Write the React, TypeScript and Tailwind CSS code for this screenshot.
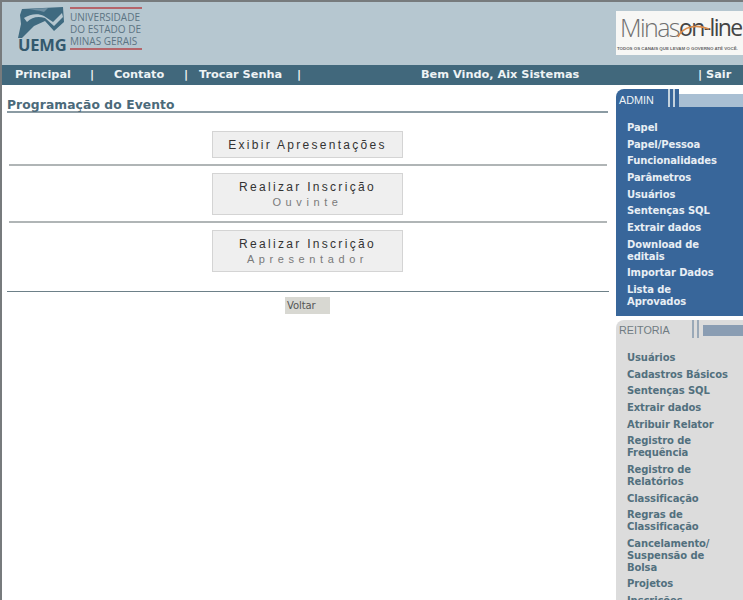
const adminLinks = [
  'Papel',
  'Papel/Pessoa',
  'Funcionalidades',
  'Parâmetros',
  'Usuários',
  'Sentenças SQL',
  'Extrair dados',
  'Download de editais',
  'Importar Dados',
  'Lista de Aprovados',
];

const reitoriaLinks = [
  'Usuários',
  'Cadastros Básicos',
  'Sentenças SQL',
  'Extrair dados',
  'Atribuir Relator',
  'Registro de Frequência',
  'Registro de Relatórios',
  'Classificação',
  'Regras de Classificação',
  'Cancelamento/ Suspensão de Bolsa',
  'Projetos',
  'Inscrições',
];

function UemgMark() {
  return (
    <svg width="47" height="31" viewBox="0 0 47 31" className="block">
      {/* dark shape of the mark */}
      <path d="M4 2 L45 0 L46 15 L36 24 L27 14 L16 19 L8 27 L4 31 L0 31 L3 17 L2 8 Z" fill="#3f6a80" />
      {/* light river */}
      <path
        d="M6 11 C12 7 20 6 26 9 L35 15 L44 6 L45 10 L36 19 L27 11 C20 9 14 10 9 15 Z"
        fill="#b6c7d0"
      />
      <path d="M11 2 L30 1 L26 5 C20 3 15 3 11 2 Z" fill="#6f8fa2" />
    </svg>
  );
}

function Logo() {
  return (
    <div className="flex items-start">
      <div className="flex w-[47px] flex-col">
        <UemgMark />
        <span className="font-['Open_Sans',sans-serif] text-[16.5px] leading-[13px] font-bold tracking-[-0.2px] text-[#33596e]">
          UEMG
        </span>
      </div>
      <div className="ml-[5px] w-[72px] border-y-[2px] border-[#b5656b] pt-[2px] pb-[1px] font-['Open_Sans',sans-serif] text-[10px] leading-[12px] text-[#5c7483] whitespace-nowrap">
        <div>UNIVERSIDADE</div>
        <div>DO ESTADO DE</div>
        <div>MINAS GERAIS</div>
      </div>
    </div>
  );
}

function MinasLogo() {
  return (
    <div className="relative flex h-[44px] w-[127px] flex-col overflow-hidden bg-[#f7f7f5] pl-[4px]">
      <div className="flex h-[33px] items-end font-['Open_Sans',sans-serif] text-[25px] leading-[33px] tracking-[-1.6px] font-light text-[#6f6f6f] whitespace-nowrap">
        <span>Minas</span>
        <span className="text-[23px] tracking-[-1.6px] font-normal text-[#444]">on-line</span>
      </div>
      <svg width="34" height="14" viewBox="0 0 34 14" className="absolute top-[13px] left-[61px]">
        <path d="M1 13 C6 2 20 0 32 5" fill="none" stroke="#d98a4a" strokeWidth="1.6" />
      </svg>
      <div className="mt-[2px] -ml-[3px] font-['Liberation_Sans',sans-serif] text-[4.4px] leading-[6px] font-bold text-[#666] whitespace-nowrap">
        TODOS OS CANAIS QUE LEVAM O GOVERNO ATÉ VOCÊ.
      </div>
    </div>
  );
}

function SideMenu({ links, color }: { links: string[]; color: string }) {
  return (
    <ul className={`flex flex-col gap-[4.67px] pl-[11px] pr-[14px] text-[10px] leading-[12px] font-bold tracking-[-0.1px] ${color}`}>
      {links.map((link) => (
        <li key={link}>{link}</li>
      ))}
    </ul>
  );
}

export default function App() {
  return (
    <div className="h-[600px] w-[743px] overflow-hidden border-t-[2px] border-l-[2px] border-[#777b7d] bg-white font-['DejaVu_Sans',sans-serif]">
      {/* Header */}
      <div className="flex h-[63px] items-start justify-between bg-[#b6c7d0]">
        <div className="pt-[5px] pl-[16px]">
          <Logo />
        </div>
        <div className="pt-[9px]">
          <MinasLogo />
        </div>
      </div>

      {/* Nav */}
      <div className="flex h-[20px] items-center bg-[#41687c] text-[11.3px] font-bold text-[#eef3f5] whitespace-nowrap">
        <span className="ml-[13px] w-[75px]">Principal</span>
        <span className="w-[24px]">|</span>
        <span className="w-[70px]">Contato</span>
        <span className="w-[15px]">|</span>
        <span className="w-[98px]">Trocar Senha</span>
        <span className="w-[124px]">|</span>
        <span className="w-[277px]">Bem Vindo, Aix Sistemas</span>
        <span>| Sair</span>
      </div>

      <div className="flex">
        {/* Main content */}
        <div className="w-[614px] pt-[13px] pl-[5px]">
          <h1 className="w-[601px] h-[15px] border-b-[2px] border-[#8b9ba3] text-[12.3px] leading-[15px] font-bold tracking-[0.1px] text-[#4b6a7a]">
            Programação do Evento
          </h1>

          <div className="mt-[18px] ml-[2px] flex w-[598px] flex-col font-['Liberation_Sans',sans-serif] text-[12px] tracking-[2.3px] text-[#333]">
            <div className="ml-[203px] flex h-[27px] w-[191px] items-center justify-center border border-[#d4d4d4] bg-[#efefef] pt-[1px]">
              Exibir Apresentações
            </div>
            <hr className="mt-[6px] mb-[7px] border-t-[2px] border-[#b0b5b6]" />
            <div className="ml-[203px] flex h-[42px] w-[191px] flex-col items-center justify-center border border-[#d4d4d4] bg-[#efefef] pt-[2px] leading-[15px]">
              <span>Realizar Inscrição</span>
              <span className="text-[11px] tracking-[4.6px] text-[#7a7a7a]">Ouvinte</span>
            </div>
            <hr className="mt-[6px] mb-[7px] border-t-[2px] border-[#b0b5b6]" />
            <div className="ml-[203px] flex h-[42px] w-[191px] flex-col items-center justify-center border border-[#d4d4d4] bg-[#efefef] pt-[2px] leading-[15px]">
              <span>Realizar Inscrição</span>
              <span className="text-[11px] tracking-[4.6px] text-[#7a7a7a]">Apresentador</span>
            </div>
          </div>

          <hr className="mt-[19px] w-[602px] border-t-[1px] border-[#6d8088]" />
          <div className="mt-[5px] ml-[278px] flex h-[17px] w-[45px] items-center bg-[#d8d8d2] pl-[2px] text-[10px] tracking-[-0.1px] text-[#555]">
            Voltar
          </div>
        </div>

        {/* Sidebar */}
        <div className="w-[127px] pt-[4px]">
          <div className="rounded-tl-[8px] bg-[#38669a] pb-[8px]">
            <div className="flex h-[18px] items-stretch bg-white">
              <div className="flex w-[52px] items-center rounded-tl-[8px] bg-[#38669a] pt-[4px] pl-[3px] font-['Liberation_Sans',sans-serif] text-[10.8px] text-[#eef3f7]">
                ADMIN
              </div>
              <div className="w-[2px] bg-[#c3d2de]" />
              <div className="w-[3px] bg-[#38669a]" />
              <div className="w-[2px] bg-[#c3d2de]" />
              <div className="w-[4px] bg-[#38669a]" />
              <div className="mt-[5px] flex-1 bg-[#a9bfd3]" />
            </div>
            <div className="pt-[15px]">
              <SideMenu links={adminLinks} color="text-[#e8eef4]" />
            </div>
          </div>
          <div className="mt-[4px] rounded-tl-[8px] bg-[#dcdcdc] pb-[20px]">
            <div className="flex h-[18px] items-stretch">
              <div className="flex w-[76px] items-center pt-[2px] pl-[3px] font-['Liberation_Sans',sans-serif] text-[10.8px] text-[#6f7b82]">
                REITORIA
              </div>
              <div className="w-[2px] bg-[#9aa9b8]" />
              <div className="w-[3px]" />
              <div className="w-[2px] bg-[#9aa9b8]" />
              <div className="w-[4px]" />
              <div className="mt-[5px] mb-[2px] flex-1 bg-[#8a9db3]" />
            </div>
            <div className="pt-[14px]">
              <SideMenu links={reitoriaLinks} color="text-[#52707e]" />
            </div>
          </div>
        </div>
      </div>
    </div>
  );
}
